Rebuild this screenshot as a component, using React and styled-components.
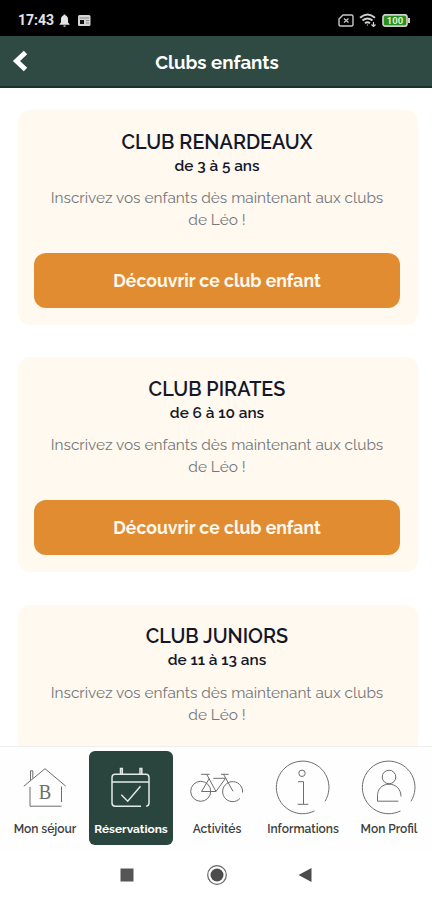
import React, { useState } from 'react';
import styled, { createGlobalStyle } from 'styled-components';

const GlobalStyle = createGlobalStyle`
  * { box-sizing: border-box; }
  body {
    margin: 0;
    background: #fff;
    font-family: Raleway, Lato, 'Open Sans', sans-serif;
  }
`;

const Screen = styled.div`
  width: 432px;
  height: 900px;
  display: flex;
  flex-direction: column;
  overflow: hidden;
  background: #fff;
`;

const StatusBar = styled.div`
  flex: none;
  height: 36px;
  padding: 4px 21px 0 18px;
  display: flex;
  align-items: center;
  justify-content: space-between;
  background: #000;
  color: #e4e4e4;
`;

const StatusGroup = styled.div`
  display: flex;
  align-items: center;
  gap: ${props => props.$gap}px;
`;

const Clock = styled.span`
  font: 700 14px/16px Roboto, sans-serif;
`;

const Header = styled.header`
  flex: none;
  height: 52px;
  padding: 0 12px;
  display: grid;
  grid-template-columns: 20px 1fr 18px;
  align-items: center;
  background: #2e4a42;
  border-bottom: 2px solid #17332b;
`;

const BackButton = styled.button`
  padding: 0;
  border: 0;
  background: none;
  display: flex;
`;

const PageTitle = styled.h1`
  margin: 0;
  padding-top: 2px;
  text-align: center;
  color: #fff;
  font-size: 18.7px;
  line-height: 24px;
  font-weight: 700;
`;

const ClubList = styled.main`
  flex: 1;
  min-height: 0;
  overflow-y: auto;
  scrollbar-width: none;
  padding: 22px 14px 0 18px;
`;

const Card = styled.section`
  padding: 16.5px 18px 17px 16px;
  margin-bottom: 32.4px;
  border-radius: 12px;
  background: #fff9ef;
  text-align: center;
`;

const ClubName = styled.h2`
  margin: 0;
  color: #14172a;
  font-size: 19.8px;
  line-height: 30px;
  font-weight: 600;
`;

const ClubAge = styled.p`
  margin: 0;
  color: #14172a;
  font-size: 15.4px;
  line-height: 19px;
  font-weight: 600;
`;

const ClubText = styled.p`
  margin: 11.5px 0 22px;
  padding: 0 10px;
  color: #74777c;
  font-size: 15.4px;
  line-height: 22px;
  font-weight: 400;
`;

const ClubButton = styled.button`
  display: block;
  width: 100%;
  height: 55px;
  padding: 0;
  border: 0;
  border-radius: 12px;
  background: #e28c32;
  color: #fff9ef;
  font-family: inherit;
  font-size: 17.6px;
  font-weight: 700;
`;

const TabBar = styled.nav`
  flex: none;
  height: 104px;
  padding: 4px 0 5px 2px;
  border-top: 1px solid #eeeeee;
  display: grid;
  grid-template-columns: repeat(5, 86px);
  background: #fefefe;
`;

const Tab = styled.button`
  margin: 0 1px;
  padding: 8px 0 0;
  border: 0;
  border-radius: 6px;
  display: flex;
  flex-direction: column;
  align-items: center;
  background: ${props => (props.$active ? '#2a453e' : 'transparent')};
  color: ${props => (props.$active ? '#e3e9e7' : '#6b6e6d')};
`;

const TabLabel = styled.span`
  margin-top: 6px;
  font-family: Raleway, Lato, sans-serif;
  font-size: ${props => (props.$active ? 11.9 : 12)}px;
  line-height: 17px;
  white-space: nowrap;
  color: ${props => (props.$active ? '#fff' : '#3c4043')};
  font-weight: ${props => (props.$active ? 700 : 600)};
`;

const SystemBar = styled.div`
  flex: none;
  height: 50px;
  padding: 0 118px;
  display: flex;
  align-items: center;
  justify-content: space-between;
  background: #fff;
`;

const Line = styled.svg`
  display: block;
  fill: none;
  stroke: currentColor;
  stroke-width: ${props => props.$weight || 1};
`;

function HouseIcon() {
  return (
    <Line width="56" height="56" viewBox="0 0 56 56">
      <path d="M6.8 27.2 28 9.7l20.8 17.5M13.5 21.5v-9.7h2.3v7.5M13 28v19.2h31.5M44.5 43V27.5" />
      <text transform="translate(28 40) scale(0.85 1)" textAnchor="middle" fontFamily="Liberation Serif, serif" fontSize="22" fill="currentColor" stroke="none">B</text>
    </Line>
  );
}

function CalendarIcon() {
  return (
    <Line width="56" height="56" viewBox="0 0 56 56" $weight={1.5}>
      <path d="M38 47.3H12.2a3.2 3.2 0 0 1-3.2-3.2V18.5a3.2 3.2 0 0 1 3.2-3.2h30.6a3.2 3.2 0 0 1 3.2 3.2v25.6q0 2.7-2.8 3.2M9 23h37" />
      <path d="M17.5 15V9.5h1.8V15M37 15V9.5h1.8V15" />
      <path d="m18.3 35.8 6.4 6.4 12.8-15" />
    </Line>
  );
}

function BikeIcon() {
  return (
    <Line width="56" height="56" viewBox="0 0 56 56">
      <circle cx="11.7" cy="32.3" r="10" />
      <path d="M53.5 33.5V31A10 10 0 1 0 51 39.4" />
      <path d="M12.5 32.5H27l9.5-13.2H24.3M12.5 32.5l7.8-13M17.7 15.3 27 32.5M12 15.3h8.7M32 15.3h7.7M34.5 15.3l9.5 17" />
    </Line>
  );
}

function InfoIcon() {
  return (
    <Line width="56" height="56" viewBox="0 0 56 56">
      <path d="M50 42.3A26.3 26.3 0 1 0 39.5 51.9" />
      <circle cx="27" cy="14.3" r="3.2" />
      <path d="M23 22.7h5.5v22.6M22.7 45.3h10.6" />
    </Line>
  );
}

function ProfileIcon() {
  return (
    <Line width="56" height="56" viewBox="0 0 56 56">
      <path d="M50 42.3A26.3 26.3 0 1 0 39.5 51.9" />
      <circle cx="28" cy="18" r="6.8" />
      <path d="M37.3 42.2H16.5v-5.5c0-6 4-11.5 11.5-11.5s12 5.5 12 12.3" />
    </Line>
  );
}

const clubs = [
  { name: 'CLUB RENARDEAUX', age: 'de 3 à 5 ans' },
  { name: 'CLUB PIRATES', age: 'de 6 à 10 ans' },
  { name: 'CLUB JUNIORS', age: 'de 11 à 13 ans' },
];

const tabs = [
  { label: 'Mon séjour', icon: HouseIcon },
  { label: 'Réservations', icon: CalendarIcon },
  { label: 'Activités', icon: BikeIcon },
  { label: 'Informations', icon: InfoIcon },
  { label: 'Mon Profil', icon: ProfileIcon },
];

function ClubCard({ club }) {
  return (
    <Card>
      <ClubName>{club.name}</ClubName>
      <ClubAge>{club.age}</ClubAge>
      <ClubText>Inscrivez vos enfants dès maintenant aux clubs de Léo !</ClubText>
      <ClubButton>Découvrir ce club enfant</ClubButton>
    </Card>
  );
}

function Status() {
  return (
    <StatusBar>
      <StatusGroup $gap={4.5}>
        <Clock>17:43</Clock>
        <svg width="11" height="13" viewBox="0 0 11 13" fill="#e4e4e4">
          <path d="M5.5 0.5c.8 0 1.1.5 1.1 1.1C8.3 2.1 9 3.6 9 5.3V8.5l1.5 1.6v.7H.5v-.7L2 8.5V5.3C2 3.6 2.7 2.1 4.4 1.6c0-.6.3-1.1 1.1-1.1zM4.2 11.5h2.6a1.3 1.3 0 0 1-2.6 0z" />
        </svg>
        <svg width="18" height="13" viewBox="0 0 18 13">
          <rect x="4" y="1" width="12.5" height="11" rx="1.5" fill="#d4d4d4" />
          <path d="M5.5 4H15M12 6.5h3M12 9h3" stroke="#888" />
          <rect x="6" y="6" width="4" height="4" fill="#111" />
        </svg>
      </StatusGroup>
      <StatusGroup $gap={5}>
        <svg width="16" height="13" viewBox="0 0 16 13" fill="none" stroke="#c8c8c8" strokeWidth="1.4">
          <path d="M5 1h8.5q1.5 0 1.5 1.5v8q0 1.5-1.5 1.5h-11Q1 12 1 10.5V5z" />
          <path d="m6 4.5 4.5 4M10.5 4.5 6 8.5" strokeWidth="1.3" />
        </svg>
        <svg width="18" height="14" viewBox="0 0 18 14" fill="none" stroke="#d0d0d0" strokeWidth="1.9">
          <path d="M1 4.8q7.5-6.6 15 0M3.5 7.6q5-4.2 10 0M6 10.3q2.5-2 5 0" />
          <path d="M8.500 12.500v-1M14.500 9v4.500M12.500 11.500l2 2 2-2" strokeWidth="1.2" />
        </svg>
        <svg width="29" height="13" viewBox="0 0 29 13">
          <rect x="1" y="0.8" width="24" height="11.4" rx="2.5" fill="#2a8d20" stroke="#cfcfcf" strokeWidth="1.7" />
          <path d="M27 4v5" stroke="#cfcfcf" strokeWidth="2" />
          <text x="13" y="10" textAnchor="middle" fontFamily="Roboto, sans-serif" fontSize="9.5" fontWeight="700" fill="#d9f7cf">100</text>
        </svg>
      </StatusGroup>
    </StatusBar>
  );
}

function App() {
  const [active, setActive] = useState(1);

  return (
    <>
      <GlobalStyle />
      <Screen>
        <Status />
        <Header>
          <BackButton aria-label="Retour">
            <svg width="16" height="22" viewBox="0 0 16 22" fill="none" stroke="#fff" strokeWidth="5">
              <path d="M13.5 2.500 4.500 11l9 8.500" />
            </svg>
          </BackButton>
          <PageTitle>Clubs enfants</PageTitle>
        </Header>
        <ClubList>
          {clubs.map(club => (
            <ClubCard key={club.name} club={club} />
          ))}
        </ClubList>
        <TabBar>
          {tabs.map(({ label, icon: Icon }, i) => (
            <Tab key={label} $active={i === active} onClick={() => setActive(i)}>
              <Icon />
              <TabLabel $active={i === active}>{label}</TabLabel>
            </Tab>
          ))}
        </TabBar>
        <SystemBar>
          <svg width="18" height="24" viewBox="0 0 18 24">
            <rect x="2.5" y="5.5" width="13" height="13" fill="#555" />
          </svg>
          <svg width="24" height="24" viewBox="0 0 24 24">
            <circle cx="13" cy="12" r="9.3" fill="none" stroke="#666" strokeWidth="1.2" />
            <circle cx="13" cy="12" r="6.5" fill="#4c4c4c" />
          </svg>
          <svg width="18" height="24" viewBox="0 0 18 24">
            <path d="M15.5 5v14l-13-7z" fill="#4c4c4c" />
          </svg>
        </SystemBar>
      </Screen>
    </>
  );
}

export default App;
